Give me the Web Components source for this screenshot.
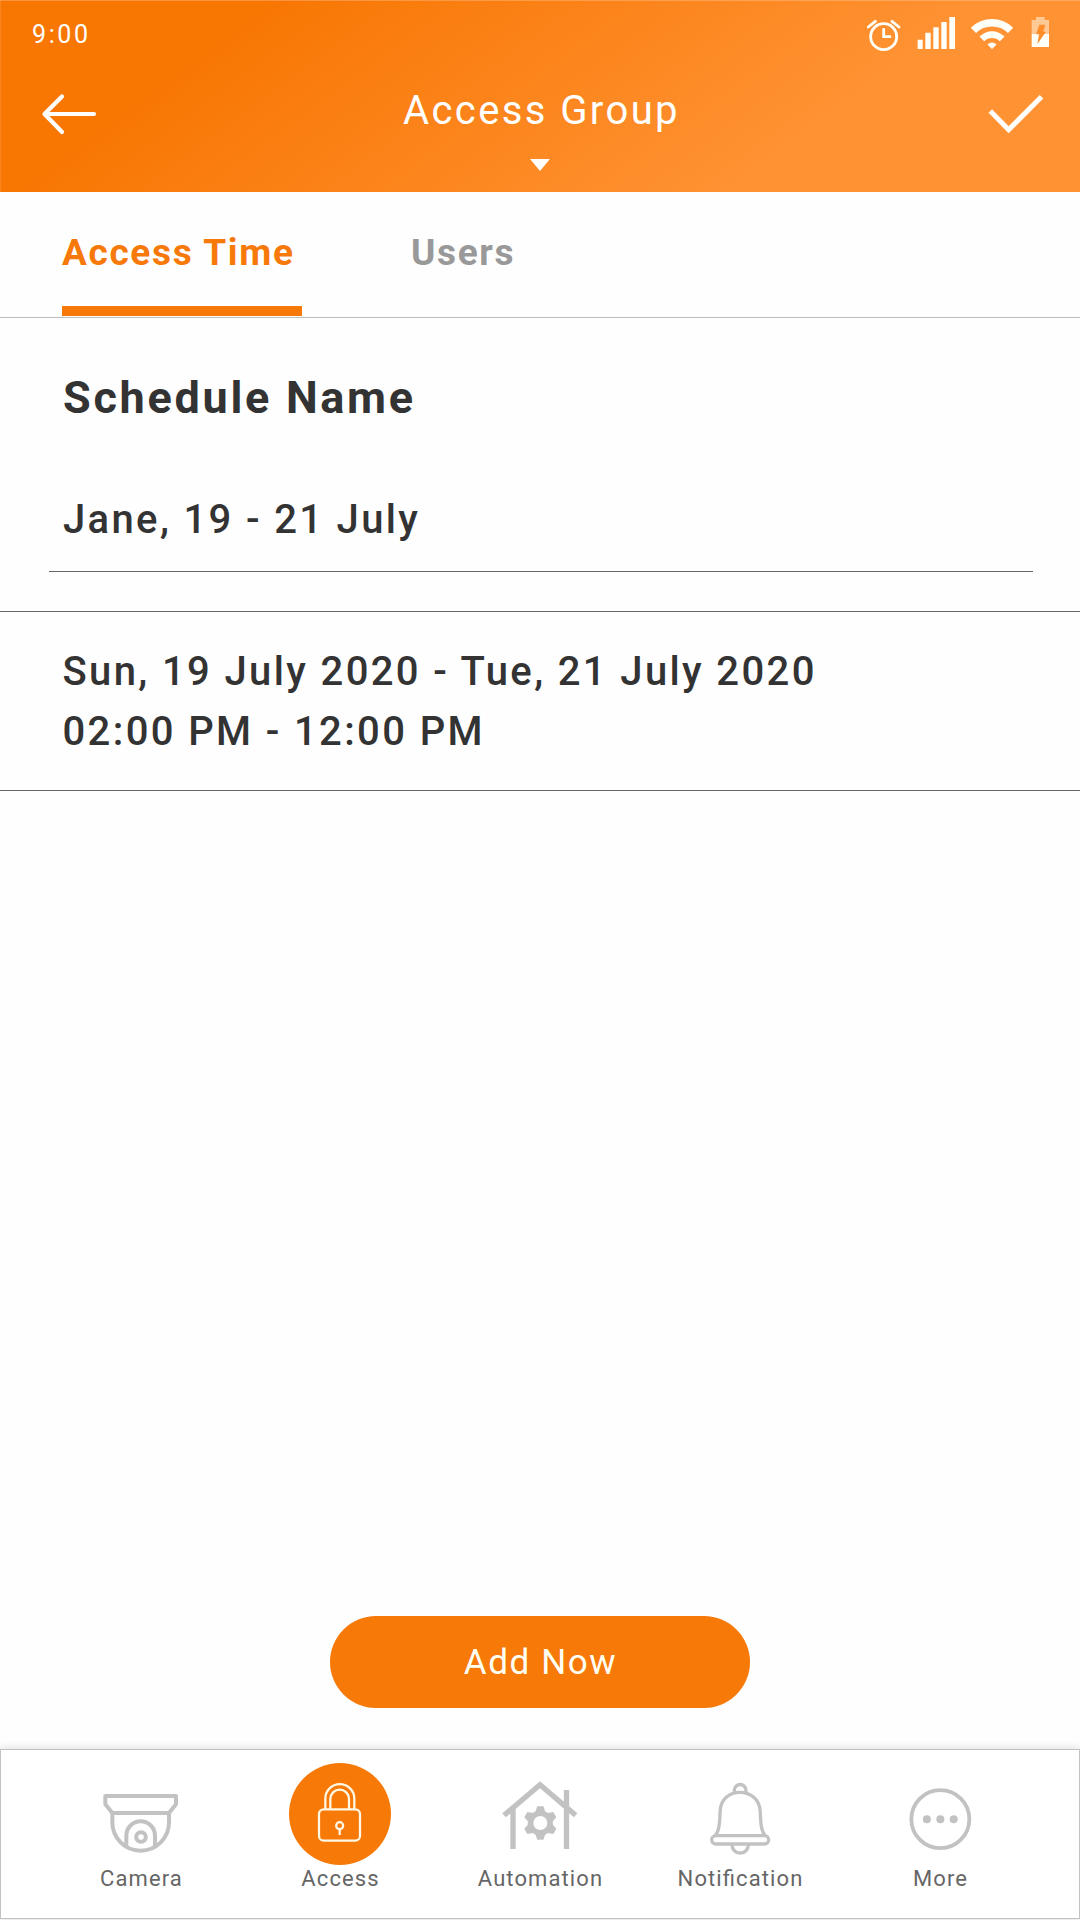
<!DOCTYPE html>
<html lang="en">
<head>
<meta charset="utf-8">
<title>Access Group</title>
<style>
html,body{margin:0;height:100%}
body{font-family:Roboto,"Liberation Sans",sans-serif;color:#333;background:#fefefe}
</style>
</head>
<body>
<access-app></access-app>
<script>
const define = (name, html) => {
  const tpl = document.createElement('template');
  tpl.innerHTML = html;
  customElements.define(name, class extends HTMLElement {
    constructor() {
      super();
      this.attachShadow({ mode: 'open' }).append(tpl.content.cloneNode(true));
    }
  });
};

define('status-bar', `
<style>
:host{display:flex;height:69px;padding:0 30px 0 32px;box-sizing:border-box;color:#fff}
.time{font-size:25px;line-height:69px;letter-spacing:2.600px;flex:1}
svg{display:block;height:36px;margin-top:16px;fill:#fffffa}
.line{fill:none;stroke:#fffffa;stroke-width:8.500;stroke-linecap:round}
</style>
<span class="time">9:00</span>
<svg width="34" viewBox="51 48 102 108"><g class="line"><circle cx="101" cy="110" r="39"/><path d="M101 88V110H120M55 81L76 64M126 64L147 81"/></g></svg>
<svg width="39" viewBox="201 48 117 108" style="margin-left:16px"><path d="M203 119h15v28h-15zM226 98h16v49h-16zM250 82h16v65h-16zM274 66h16v81h-16zM298 51h17v96h-17z"/></svg>
<svg width="44" viewBox="360 48 132 108" style="margin-left:14px"><path d="M362.400 83.400A90 90 0 0 1 489.600 83.400L474 99A68 68 0 0 0 378 99ZM388.500 109.500A53 53 0 0 1 463.500 109.500L449.500 123.500A33 33 0 0 0 402.500 123.500ZM412.500 133.500A19 19 0 0 1 439.500 133.500L426 147Z"/></svg>
<svg width="19" viewBox="543 48 57 108" style="margin-left:17px"><path opacity=".5" d="M558 51H584V60H597V102H545V60H558Z"/><path d="M545 102H597V141H545Z"/><path fill="#ff8e2b" d="M568 74H586L580 95H588L562 132L567 103H558Z"/></svg>
`);

define('app-header', `
<style>
:host{display:block;height:192px;color:#fff;box-shadow:inset 0 1px rgba(255,255,255,.22),inset 1px 0 rgba(255,255,255,.12);
background:linear-gradient(143.500deg,#f87602 19%,#ff9233 74%)}
.row{display:flex;justify-content:space-between;padding:0 39px}
svg{display:block;fill:none;stroke:#fff}
.btn{margin-top:21px}
.mid{display:flex;flex-direction:column;align-items:center}
.title{font-size:40px;line-height:83px;letter-spacing:2.400px;padding-left:3px;white-space:nowrap}
.caret{margin-top:7px;fill:#fff;stroke:none}
</style>
<status-bar></status-bar>
<div class="row">
  <svg class="btn" width="62" height="48" viewBox="39 90 62 48" stroke-width="4.200" stroke-linecap="round" stroke-linejoin="round"><path d="M62 96.500L44.500 114L62 132M45 114H94"/></svg>
  <div class="mid"><div class="title"><slot></slot></div>
  <svg class="caret" width="20" height="12"><path d="M0 0H20L10 12Z"/></svg></div>
  <svg class="btn" width="62" height="48" viewBox="979 90 62 48" stroke-width="5" style="overflow:visible"><path d="M990.300 111L1008.600 129.800L1041.500 96.700"/></svg>
</div>
`);

define('app-tab', `
<style>
:host{display:block;color:#999;font-weight:700;font-size:37px;letter-spacing:1.650px;white-space:nowrap}
.t{padding-top:8px;line-height:106px;height:106px}
:host([active]){color:#f7790a;width:240px;border-bottom:10px solid #f7790a}
</style><div class="t"><slot></slot></div>
`);

define('tab-bar', `
<style>:host{display:flex;gap:109px;height:126px;box-sizing:border-box;padding-left:62px;border-bottom:1px solid #bdbdbd;align-items:flex-start}</style><slot></slot>
`);

define('text-field', `
<style>
:host{display:block}
.label{font-weight:700;font-size:45px;line-height:99px;padding:30px 0 0 63px;letter-spacing:2.700px}
.value{font-weight:500;font-size:40px;line-height:100px;height:101px;padding:23px 0 0 14.500px;margin:0 47px 0 48.500px;border-bottom:1px solid #666;letter-spacing:2.350px}
</style>
<div class="label"><slot name="label"></slot></div><div class="value"><slot></slot></div>
`);

define('schedule-row', `
<style>
:host{display:flex;flex-direction:column;box-sizing:border-box;height:180px;margin-top:39px;padding:30px 0 0 62.500px;border:solid #666;border-width:1px 0;
font-weight:500;font-size:40px;line-height:60px;letter-spacing:2.370px;white-space:nowrap}
</style><slot></slot>
`);

define('pill-button', `
<style>
:host{display:block}
button{display:block;width:420px;height:92px;border:0;border-radius:46px;background:#f77908;color:#fffff4;font:400 35px/90px Roboto,sans-serif;letter-spacing:1.600px;padding:2px 0 0 1px}
</style><button><slot></slot></button>
`);

define('nav-item', `
<style>
:host{display:flex;flex-direction:column;align-items:center;width:200px;font-size:22px;line-height:25px;color:#666;letter-spacing:1.100px;font-feature-settings:"liga" 1;text-indent:1px}
</style><slot name="icon"></slot><span><slot></slot></span>
`);

define('bottom-nav', `
<style>
:host{display:flex;box-sizing:border-box;height:170px;margin-bottom:1px;padding:10px 0 0 39px;background:#fff;border:1px solid #c2c2c2;box-shadow:0 0 9px rgba(0,0,0,.16)}
svg{display:block;width:108px;height:106px;fill:none;stroke:#c2c2c2;stroke-width:10}
</style>
<nav-item style="text-indent:3px"><svg slot="icon" viewBox="258 60 324 318" stroke-linejoin="round"><g style="stroke-width:12"><path d="M316 168H528V193L507 219H337L316 193ZM337 219V247A85 85 0 0 0 507 247V219M379 319V287A43 43 0 0 1 465 287V319"/><circle cx="423" cy="291" r="14.500"/></g></svg>Camera</nav-item>
<nav-item><svg slot="icon" viewBox="858 60 324 318"><circle cx="1020" cy="222" r="153" fill="#f77908" stroke="none"/><g stroke="#fff8e4" style="stroke-width:6.800"><path d="M976 207V176A43.500 43.500 0 0 1 1063 176V207M991 207V177A28 28 0 0 1 1047 177V207"/><rect x="957" y="208" width="123" height="94" rx="14"/><circle cx="1019" cy="257" r="10.500"/><path d="M1019 268V285"/></g></svg>Access</nav-item>
<nav-item><svg slot="icon" viewBox="198 60 324 318"><path style="stroke-width:16" d="M252 226L360 134L467 226M279 204V327M439.500 150V327"/><path style="stroke:none" fill="#c2c2c2" fill-rule="evenodd" id="gear" d=""/></svg>Automation</nav-item>
<nav-item><svg slot="icon" viewBox="798 60 324 318" stroke-linejoin="round"><path d="M885 288C899 272 899 245 900.500 212C902 178 928 157 960 157S1018 178 1020.500 212C1022 245 1022 272 1036 288M943 157V151A17.500 17.500 0 0 1 978 151V157M936 315A24.500 24.500 0 0 0 985 315"/><rect x="875" y="287" width="171" height="25" rx="12.500"/></svg>Notification</nav-item>
<nav-item><svg slot="icon" viewBox="258 60 324 318"><circle cx="421" cy="237.500" r="87" style="stroke-width:11.500"/><g fill="#c2c2c2" stroke="none"><circle cx="380.500" cy="238" r="12"/><circle cx="421" cy="238" r="12"/><circle cx="461" cy="238" r="12"/></g></svg>More</nav-item>
`);

define('access-app', `
<style>
:host{display:flex;flex-direction:column;width:1080px;height:1920px;overflow:hidden}
main{flex:1;display:flex;flex-direction:column}
pill-button{margin:auto auto 41px}
</style>
<app-header>Access Group</app-header>
<tab-bar><app-tab active>Access Time</app-tab><app-tab>Users</app-tab></tab-bar>
<main>
<text-field><span slot="label">Schedule Name</span>Jane, 19 - 21 July</text-field>
<schedule-row><span>Sun, 19 July 2020 - Tue, 21 July 2020</span><span>02:00 PM - 12:00 PM</span></schedule-row>
<pill-button>Add Now</pill-button>
</main>
<bottom-nav></bottom-nav>
`);

/* Six-toothed gear with a round hub hole. */
{
  const root = document.querySelector('access-app').shadowRoot.querySelector('bottom-nav').shadowRoot;
  const pts = [];
  for (let i = 0; i < 6; i++) {
    const a = -90 + i * 60;
    for (const [r, d] of [[38, -22], [51, -10.5], [51, 10.5], [38, 22]]) {
      const t = (a + d) * Math.PI / 180;
      pts.push((361 + r * Math.cos(t)).toFixed(1) + ' ' + (249 + r * Math.sin(t)).toFixed(1));
    }
  }
  root.getElementById('gear').setAttribute('d', 'M' + pts.join('L') + 'ZM382 249A21 21 0 1 0 340 249A21 21 0 1 0 382 249Z');
}
</script>
</body>
</html>
